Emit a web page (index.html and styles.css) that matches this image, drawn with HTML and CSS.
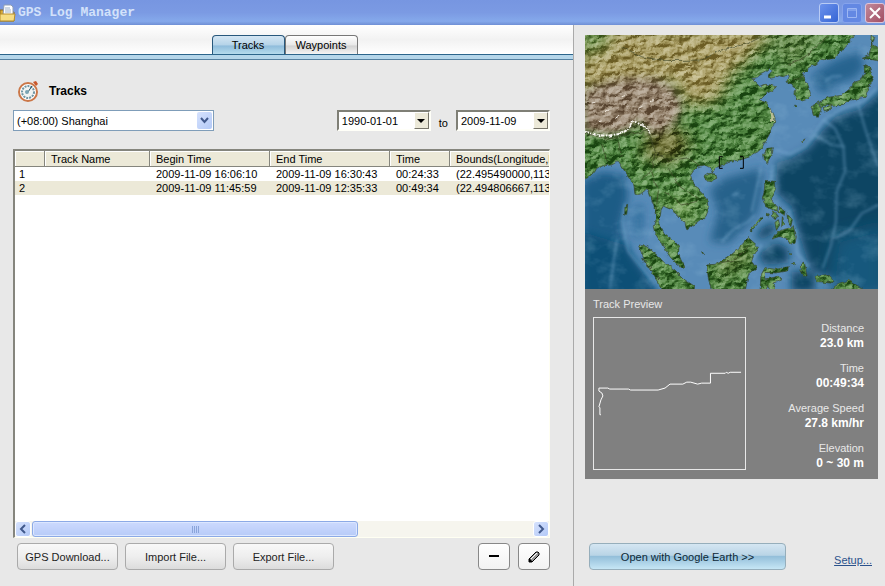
FILE: index.html
```html
<!DOCTYPE html>
<html lang="en">
<head>
<meta charset="UTF-8">
<meta name="viewport" content="width=device-width, initial-scale=1.0">
<title>GPS Log Manager</title>
<link rel="stylesheet" href="styles.css">
</head>
<body>
<header class="titlebar">
  <svg class="app-icon" width="16" height="18" viewBox="0 0 16 18">
    <path d="M0 6h3l2 2h9v9H0z" fill="#d9a935" stroke="#8a6a20"/>
    <path d="M4 1h7l2 2v8H3z" fill="#fff" stroke="#8e9db5"/>
    <path d="M5 4h5M5 6h6M5 8h6" stroke="#9bb0cc"/>
    <path d="M0 10h15l-1 7H0z" fill="#f6dd83" stroke="#b58d2d"/>
  </svg>
  <h1 class="title">GPS Log Manager</h1>
  <div class="window-buttons">
    <button class="win-btn" aria-label="Minimize"><svg width="18" height="18"><path d="M4 13h7" stroke="#fff" stroke-width="3"/></svg></button>
    <button class="win-btn win-off" aria-label="Maximize" disabled><svg width="18" height="18"><path d="M4.500 4.500h9v9h-9zM4 6h10" fill="none" stroke="#9db7f3" stroke-width="1"/></svg></button>
    <button class="win-btn win-close" aria-label="Close"><svg width="18" height="18"><path d="M4 4l10 10M14 4L4 14" stroke="#fff" stroke-width="2"/></svg></button>
  </div>
</header>

<div class="window">
  <main class="left">
    <nav class="tabs">
      <button class="tab active">Tracks</button>
      <button class="tab">Waypoints</button>
    </nav>
    <div class="tab-line"></div>

    <section class="content">
      <div class="heading">
        <svg width="22" height="22" viewBox="0 0 22 22">
          <path d="M15 2l3-1 2 3-2 2z" fill="#c9572b"/>
          <circle cx="10" cy="12" r="9" fill="#fff" stroke="#cb7748" stroke-width="2"/>
          <circle cx="10" cy="12" r="6" fill="#f1f4f2" stroke="#6f95a3" stroke-width="2" stroke-dasharray="2 1"/>
          <path d="M8 13l2-1 4-6" fill="none" stroke="#234f61"/>
          <circle cx="9" cy="12" r="2" fill="#7ba5b4"/>
        </svg>
        <h2>Tracks</h2>
      </div>

      <div class="filters">
        <div class="combo zone">
          <select aria-label="Time zone"><option>(+08:00) Shanghai</option></select>
          <span class="arrow"><svg width="9" height="7" viewBox="0 0 9 7"><path d="M1 1l3.500 4L8 1" fill="none" stroke="#41598c" stroke-width="2"/></svg></span>
        </div>
        <div class="dates">
          <div class="combo date">
            <select id="from" aria-label="From"><option>1990-01-01</option></select>
            <span class="arrow"><svg width="8" height="4"><path d="M0 0h8L4 4z"/></svg></span>
          </div>
          <label for="until">to</label>
          <div class="combo date">
            <select id="until"><option>2009-11-09</option></select>
            <span class="arrow"><svg width="8" height="4"><path d="M0 0h8L4 4z"/></svg></span>
          </div>
        </div>
      </div>

      <div class="list">
        <div class="rows">
          <table>
            <colgroup><col class="c-num"><col class="c-name"><col class="c-date"><col class="c-date"><col class="c-time"><col class="c-bounds"></colgroup>
            <thead>
              <tr><th></th><th>Track Name</th><th>Begin Time</th><th>End Time</th><th>Time</th><th>Bounds(Longitude,L</th></tr>
            </thead>
            <tbody>
              <tr><td>1</td><td></td><td>2009-11-09 16:06:10</td><td>2009-11-09 16:30:43</td><td>00:24:33</td><td>(22.495490000,113</td></tr>
              <tr class="selected"><td>2</td><td></td><td>2009-11-09 11:45:59</td><td>2009-11-09 12:35:33</td><td>00:49:34</td><td>(22.494806667,113</td></tr>
            </tbody>
          </table>
        </div>
        <div class="scrollbar">
          <button class="scroll-btn" aria-label="Scroll left"><svg width="8" height="10"><path d="M6 1L2 5l4 4" fill="none" stroke="#41598c" stroke-width="2"/></svg></button>
          <div class="scroll-track"><div class="scroll-thumb"><i></i><i></i><i></i><i></i></div></div>
          <button class="scroll-btn" aria-label="Scroll right"><svg width="8" height="10"><path d="M2 1l4 4-4 4" fill="none" stroke="#41598c" stroke-width="2"/></svg></button>
        </div>
      </div>

      <div class="actions">
        <button class="btn">GPS Download...</button>
        <button class="btn">Import File...</button>
        <button class="btn">Export File...</button>
        <div class="tools">
          <button class="tool" aria-label="Remove"><svg width="12" height="12"><path d="M1 5h10" stroke="#000" stroke-width="2"/></svg></button>
          <button class="tool" aria-label="Edit"><svg width="12" height="12" viewBox="0 0 12 12"><path d="M1 8L8 1h2l1 1v2l-7 7H1z" fill="#999" stroke="#000"/><path d="M1 7l4 4H1z"/><path d="M3 8l6-6" stroke="#fff"/></svg></button>
        </div>
      </div>
    </section>
  </main>

  <aside class="right">
    <div class="panel">
      <svg class="map" viewBox="30 30 879 762" preserveAspectRatio="none" role="img" aria-label="Map of East Asia">
        <defs>
          <filter id="soft" x="-20%" y="-20%" width="140%" height="140%"><feGaussianBlur stdDeviation="12"/></filter>
          <filter id="fuzz" x="-20%" y="-20%" width="140%" height="140%"><feGaussianBlur stdDeviation="4"/></filter>
          <filter id="blend" x="-20%" y="-20%" width="140%" height="140%"><feGaussianBlur stdDeviation="24"/></filter>
          <filter id="coast" x="-5%" y="-5%" width="110%" height="110%" color-interpolation-filters="sRGB">
            <feTurbulence type="fractalNoise" baseFrequency="0.06" numOctaves="2" seed="4"/>
            <feDisplacementMap in="SourceGraphic" scale="12" xChannelSelector="R" yChannelSelector="G"/>
          </filter>
          <filter id="relief" x="0" y="0" width="100%" height="100%" color-interpolation-filters="sRGB">
            <feTurbulence type="fractalNoise" baseFrequency="0.025 0.04" numOctaves="5" seed="8"/>
            <feColorMatrix values="0 0 0 0 0  0 0 0 0 0  0 0 0 0 0  1 0 0 0 0"/>
            <feDiffuseLighting surfaceScale="14" lighting-color="#fff"><feDistantLight azimuth="225" elevation="32"/></feDiffuseLighting>
          </filter>
          <filter id="seabed" x="0" y="0" width="100%" height="100%">
            <feTurbulence type="fractalNoise" baseFrequency="0.014 0.02" numOctaves="4" seed="3"/>
            <feColorMatrix values="0 0 0 0 .35  0 0 0 0 .58  0 0 0 0 .76  3 0 0 0 -1.500"/>
          </filter>
          <path id="shores" d="M20 20H838L832 42 815 58 800 78 780 98 755 105 738 103 722 116 705 128 690 140 682 152 690 165 700 182 706 205 700 222 680 228 662 225 660 205 664 190 652 180 648 172 640 178 636 164 640 158 636 150 625 155 610 152 595 158 583 160 580 150 592 138 585 130 570 142 555 150 545 158 530 160 540 172 555 185 570 178 590 180 603 186 595 195 575 205 562 218 555 225 570 232 585 250 595 265 600 280 598 295 590 310 582 330 570 350 560 370 545 383 525 395 505 402 480 408 455 415 435 422 420 430 412 444 405 428 390 420 372 424 355 438 346 452 352 470 368 490 385 510 397 530 400 555 392 575 375 590 355 600 336 615 332 605 330 590 318 582 305 568 295 560 285 552 275 548 265 543 258 555 255 575 250 590 258 605 268 625 285 638 300 650 312 665 310 685 318 705 330 726 320 727 300 712 285 695 272 675 262 655 250 640 240 625 235 605 242 580 240 555 232 530 222 500 212 495 195 508 180 508 176 480 165 460 150 440 138 420 130 408 110 420 85 422 65 430 60 440 35 460 20 465z
            M390 455l15-10 15 2 2 11-12 12-15-2zM578 370l14-2-4 22-10 25-10-10-2-17z
            M570 470l28-2 2 27-8 15-4 20 14 12 10 18-14-4-18-8-8-3-10-25 6-25z
            M600 628l20-13 20-5 15-5 9 30-4 20-15 2-10-17-20-5-23 7zM560 575l3 4-35 40-6 0zM595 560l14 8-8 16-9-8zM612 545l18 12-2 14-14-10zM600 592l10-8 4 16-10 16zM622 575l7 24-9 6zM636 566l16 18-4 18-10-14z
            M395 720l25-2 35-18 25-20 20-20 20-22 25 22 5 8-15 22-5 20 15 20-25 20-10 50H410l-10-40z
            M190 660l25 5 25 20 30 30 30 20 30 30 28 18v20h-90l-33-53-25-40z
            M555 800l3-50 12-22 30 5 40-8-2 12-36 7-32-2 3 20 38-8 9 11-26 9 12 26-16 2-14-22-8 22zM680 715l8-4 4 20 4 22-10-2-8-14zM722 755l38-7 18 20-8 6-40-4zM780 784l40-18 34 20 40 14H760z
            M868 122l17 8 9 30-14 30-10 27-20 3-30 7-20 12-30 5-15-7-18 8-7-12 30-16 40-6 25-20 15-20 20-7 8-16zM708 245l20-9 10 14-8 27-15-6zM745 247l25-6-5 15-17 5zM862 100l18-8 12-34 30 16v36l-30-6zM889 25l9 16-6 18-4-20z
            M150 545l8-4-3 30-6 0zM380 680l7 2-3 8zM680 350l9-8-6 11zM656 240l10 3-8 5zM200 700l10 6-3 6zM220 720l10 6-3 6zM245 752l9 7-4 6zM650 715l12 2-6 5zM575 565l8 2-4 10zM640 680l8 8-6 2z"/>
          <clipPath id="land"><use href="#shores"/></clipPath>
        </defs>
        <rect x="30" y="30" width="879" height="762" fill="#588bb8"/>
        <g fill="#084463" filter="url(#soft)">
          <path d="M940 180L860 250 780 275 740 320 700 370 645 402 606 412 600 500 650 545 670 620 700 720 740 750 800 760 940 800z"/>
          <path d="M20 470L80 440 150 450 160 510 138 600 160 690 220 760 250 820H20z" fill="#1b5b86"/>
          <path d="M405 495L450 460 560 430 565 480 548 560 520 600 460 655 405 650 430 560z" fill="#28628b"/>
          <path d="M710 150L780 105 850 80 870 125 840 160 790 175 760 200 730 200z" fill="#25638f"/>
          <path d="M550 690L600 650 640 670 640 715 570 720zM540 640l20-30 35-20 8 30-35 20z"/>
          <path d="M180 540l25 0 0 70-20 40-15-50z" fill="#2d6d9c"/>
          <path d="M650 740h70v60h-70z"/>
        </g>
        <path d="M20 820V620L150 660 250 820z" fill="#0d4f76" filter="url(#soft)"/>
        <path d="M780 640l150-40v220H760z" fill="#18587d" filter="url(#blend)"/>
        <g fill="none" stroke="#8cbbe0" stroke-width="5" opacity=".5" filter="url(#fuzz)">
          <path d="M600 375l45 12 45-22 30-40 25-40 60-35 60-20 40-40M745 285l35 25 25 55 5 75-25 60-2 90-15 70-25 70M850 240l20 70 20 60 19 55M720 330l50 30 40 5M780 640l45-25 35-50 50-25M594 420l-6 50M640 555l22 60 5 70 35 40M150 535l-8 55 18 90 70 85M105 792l12-90 10-60"/>
          <path d="M750 170l20-15 30-2M470 512l20-6M440 650l40-40 40-20 20-20M530 560l15-70 12-60M560 660l-30 50"/>
        </g>
        <rect x="30" y="30" width="879" height="762" filter="url(#seabed)" opacity=".2"/>
        <g filter="url(#coast)">
          <g clip-path="url(#land)">
            <rect x="20" y="20" width="900" height="790" fill="#4f8440"/>
            <g filter="url(#blend)">
              <path d="M0 0H600L540 90 470 150 430 230 330 250 300 180 0 210z" fill="#a69a60"/>
              <path d="M560 0h200l-90 120-60-10z" fill="#5f8444"/>
              <path d="M0 0h90l20 60-100 40z" fill="#6f9250"/>
              <path d="M220 300l90 0 40 60-60 60-90-20z" fill="#66682f"/>
              <path d="M440 690l100-50-20 80-100 50z" fill="#5a7a3b"/>
              <path d="M280 520h70v70h-50z" fill="#77a258"/>
            </g>
            <path d="M20 195L90 170 160 155 250 160 300 190 325 240 305 290 270 320 230 330 190 290 160 320 100 332 20 320z" fill="#95836d" filter="url(#soft)"/>
            <rect x="20" y="20" width="900" height="790" filter="url(#relief)" class="shade"/>
            <path d="M30 320l30 10 40 2 38-6 25-15 8-22 20 5 25 15 14 16" fill="none" stroke="#f7f5f0" stroke-width="6" stroke-dasharray="12 4 5 3"/>
            <path d="M50 235l12-4M90 260l12-5M140 215l10-3M120 280l14-8M190 250l12-6M70 290l10-2M225 230l8-4" stroke="#eee8de" stroke-width="3"/>
            <path d="M570 230q22 22 18 60l14 2V245z" fill="#b8bf94"/>
            <path d="M140 65l60 30 70 12 110-2 60-30 80-20 40-20M30 325l70 18 60-15 60-10 20 60 40 30 60-10 50 35M240 385l-10 50-30 30M230 440l20 60-8 60M280 430l30 50 60 40M270 500l50 40 50-12M80 355l15 55M130 350l10 50M640 120l50-25 70-65M655 165l30-10M430 715l50-10 40-40" fill="none" stroke="#3d4425" stroke-width="2"/>
          </g>
          <use href="#shores" fill="none" stroke="#38462c" stroke-width="2"/>
        </g>
        <path d="M443 395h-10v35h10M495 395h10v35h-10" fill="none" stroke="#000" stroke-width="3"/>
      </svg>

      <div class="preview">
        <div class="preview-track">
          <h3>Track Preview</h3>
          <svg class="track" width="153" height="153" viewBox="0 0 153 153">
            <path d="M7 98H6V91L5 90 7 83 9 79 8 76 5 74V71H14L16 72H35L37 73H65L72 71 77 67H90L94 65H98L105 67 109 66H118V56H133L134 55 136 56 138 55H149" fill="none" stroke="#fff" stroke-width="1"/>
          </svg>
        </div>
        <dl class="stats">
          <div><dt>Distance</dt><dd>23.0 km</dd></div>
          <div><dt>Time</dt><dd>00:49:34</dd></div>
          <div><dt>Average Speed</dt><dd>27.8 km/hr</dd></div>
          <div><dt>Elevation</dt><dd>0 ~ 30 m</dd></div>
        </dl>
      </div>
    </div>

    <div class="links">
      <button class="earth">Open with Google Earth &gt;&gt;</button>
      <a href="#setup">Setup...</a>
    </div>
  </aside>
</div>
</body>
</html>
```
FILE: styles.css
```css
* {
  box-sizing: border-box;
}

body {
  margin: 0;
  min-height: 100vh;
  display: flex;
  flex-direction: column;
  background: #e8e8e8;
  color: #000;
  font-family: "Liberation Sans", Arial, sans-serif;
  font-size: 11px;
}

button,
select {
  font: inherit;
  color: inherit;
  padding: 0;
}

h1, h2, h3, dl, dd {
  margin: 0;
}

svg {
  display: block;
}

/* title bar */
.titlebar {
  display: flex;
  align-items: center;
  height: 25px;
  background: linear-gradient(#7796e1, #7b9ae3 50%, #85a9eb 85%, #6f8fd5);
}

.title {
  flex: 1;
  margin-left: 2px;
  color: #d3e2fa;
  font-family: "Liberation Mono", monospace;
  font-size: 13px;
  font-weight: bold;
}

.window-buttons {
  display: flex;
  gap: 3px;
}

.win-btn {
  width: 20px;
  height: 20px;
  border: 1px solid #b8cbf5;
  border-radius: 3px;
  background: linear-gradient(135deg, #6c92ec, #3565d5);
}

.win-off {
  border-color: #86a3ec;
  background: #6388e3;
}

.win-close {
  border-color: #dfc4d8;
  background: linear-gradient(135deg, #c08a9c, #a34d62);
}

/* main area */
.window {
  flex: 1;
  display: flex;
}

.left {
  flex: 1;
  min-width: 0;
  display: flex;
  flex-direction: column;
}

.tabs {
  display: flex;
  justify-content: center;
  align-items: flex-end;
  height: 29px;
  padding-right: 4px;
  background: linear-gradient(#fff, #f2f2f2 50%, #fff);
}

.tab {
  width: 73px;
  height: 19px;
  border: 1px solid #777;
  border-bottom: none;
  border-radius: 4px 4px 0 0;
  background: linear-gradient(#fff, #e8e8e8 50%, #d2d2d2 55%, #f4f4f4);
}

.tab.active {
  border-color: #28587c;
  background: linear-gradient(#d4e6f3, #b5d3e8 50%, #8fbcdb 55%, #b5dbed);
}

.tab-line {
  height: 6px;
  border-top: 1px solid #2c658b;
  border-bottom: 1px solid #5580a0;
  background: #b5d6ea;
}

.content {
  flex: 1;
  display: flex;
  flex-direction: column;
  padding: 20px 23px 16px 13px;
}

.heading {
  display: flex;
  align-items: center;
  gap: 9px;
  height: 22px;
  padding-left: 5px;
}

.heading h2 {
  font-size: 12px;
}

.filters {
  display: flex;
  justify-content: space-between;
  margin-top: 8px;
}

.dates {
  display: flex;
  align-items: center;
  gap: 8px;
}

.dates label {
  padding-top: 4px;
}

.combo {
  position: relative;
  height: 21px;
  background: #fff;
}

.combo select {
  width: 100%;
  height: 100%;
  padding-left: 3px;
  appearance: none;
  border: 1px solid #7f9db9;
  border-radius: 0;
  background: none;
}

.arrow {
  position: absolute;
  top: 2px;
  right: 2px;
  bottom: 2px;
  width: 15px;
  display: flex;
  align-items: center;
  justify-content: center;
  border-radius: 2px;
  background: linear-gradient(135deg, #d6e2fd, #b3c9f7);
  pointer-events: none;
}

.zone {
  width: 201px;
}

.date {
  width: 94px;
}

.date select {
  border: 2px solid;
  border-color: #7f7f76 #fffff8 #fffff8 #7f7f76;
}

.date .arrow {
  border: 1px solid;
  border-color: #fff #77756a #77756a #fff;
  border-radius: 0;
  background: #ece9d8;
}

/* track list */
.list {
  flex: 1;
  display: flex;
  flex-direction: column;
  margin: 18px 0 5px;
  border: 1px solid;
  border-color: #85857d #fffff2 #fffff2 #85857d;
  border-width: 2px 1px 1px 2px;
  background: #fff;
}

.rows {
  flex: 1;
  overflow: hidden;
}

table {
  width: 100%;
  table-layout: fixed;
  border-collapse: separate;
  border-spacing: 0;
}

.c-num { width: 30px; }
.c-name { width: 105px; }
.c-date { width: 120px; }
.c-time { width: 60px; }

th,
td {
  height: 14px;
  padding: 0 0 0 6px;
  font-weight: normal;
  line-height: 14px;
  text-align: left;
  white-space: nowrap;
  overflow: hidden;
}

th {
  height: 16px;
  border-right: 1px solid #85857d;
  border-bottom: 1px solid #85857d;
  background: #ece9d8;
  box-shadow: inset 1px 1px #fff;
}

th:last-child {
  border-right: none;
}

td:first-child {
  padding-left: 4px;
}

.selected td {
  background: #ece9d8;
}

.scrollbar {
  display: flex;
  height: 16px;
  background: #f6f5ee;
}

.scroll-btn {
  display: flex;
  align-items: center;
  justify-content: center;
  width: 16px;
  border: 1px solid #fff;
  border-radius: 3px;
  background: linear-gradient(135deg, #d6e2fd, #b3c9f7);
}

.scroll-track {
  flex: 1;
}

.scroll-thumb {
  display: flex;
  align-items: center;
  justify-content: center;
  gap: 1px;
  width: 65%;
  height: 16px;
  margin-left: 1px;
  border: 1px solid #8caae6;
  border-radius: 3px;
  background: linear-gradient(#ccdafe, #b7cbf8);
  box-shadow: inset 0 0 0 1px #dce7ff;
}

.scroll-thumb i {
  width: 1px;
  height: 7px;
  background: #8ba5da;
}

/* buttons under the list */
.actions {
  display: flex;
  align-items: center;
  gap: 7px;
  padding-left: 4px;
}

.btn,
.tool {
  height: 27px;
  border: 1px solid #aaa;
  border-radius: 4px;
  background: linear-gradient(#f8f8f8, #eee 50%, #dcdcdc);
  color: #222;
}

.btn {
  width: 101px;
}

.tools {
  display: flex;
  gap: 8px;
  margin-left: auto;
}

.tool {
  display: flex;
  align-items: center;
  justify-content: center;
  width: 32px;
  border-color: #888;
  background: linear-gradient(#fff, #f2f2f2);
}

/* right side */
.right {
  display: flex;
  flex-direction: column;
  justify-content: space-between;
  width: 312px;
  padding: 10px 7px 16px 11px;
  border-left: 1px solid #aaa;
}

.panel {
  background: #808080;
  color: #e8e8e8;
}

.map {
  width: 100%;
  height: 254px;
}

.shade {
  mix-blend-mode: soft-light;
}

.preview {
  display: flex;
  justify-content: space-between;
  padding: 8px 14px 8px 8px;
}

.preview h3 {
  margin-bottom: 6px;
  font-size: 11px;
  font-weight: normal;
  line-height: 14px;
}

.track {
  border: 1px solid #e8e8e8;
}

.stats {
  padding-top: 24px;
  text-align: right;
}

.stats div {
  height: 40px;
  line-height: 15px;
}

.stats dd {
  color: #fff;
  font-size: 12px;
  font-weight: bold;
}

.stats div:last-child {
  height: 30px;
}

.links {
  display: flex;
  align-items: center;
  justify-content: space-between;
  padding: 0 6px 0 4px;
}

.earth {
  width: 197px;
  height: 27px;
  border: 1px solid #96aebb;
  border-radius: 4px;
  background: linear-gradient(#d5e6f2, #b9d4e6 45%, #94bfda 50%, #c6e6f5);
  color: #0d2836;
}

.links a {
  padding-top: 6px;
  color: #2b528c;
}
```
